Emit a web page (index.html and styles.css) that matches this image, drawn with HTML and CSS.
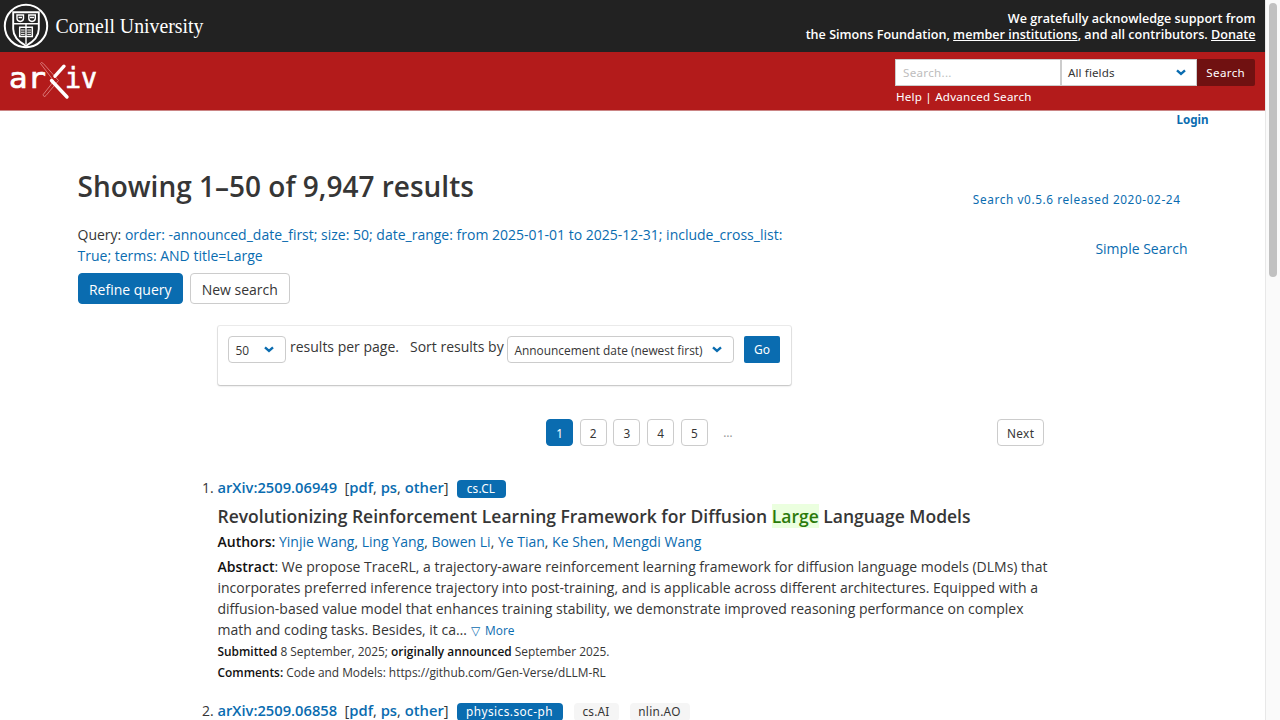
FILE: index.html
```html
<!DOCTYPE html>
<html lang="en">
<head>
<meta charset="utf-8">
<title>Search | arXiv e-print repository</title>
<link rel="stylesheet" href="styles.css">
</head>
<body>
<div class="page">
<header>
  <div class="attribution">
    <svg class="cornell" width="210" height="52" viewBox="0 0 210 52" role="img" aria-label="Cornell University">
      <g fill="none" stroke="#fff">
        <circle cx="26" cy="26" r="21.2" stroke-width="2"/>
        <path stroke-width="1.9" d="M13.2 12.3H38.8V29C38.8 37 33 42 26 45.8C19 42 13.2 37 13.2 29Z"/>
        <path stroke-width="1.4" d="M13.2 23.8H38.8M26 24V44"/>
        <path stroke-width="1.4" d="M17 15H23.5V18.5Q23.5 21 20.2 21.5Q17 21 17 18.5ZM28.8 15H35.3V18.5Q35.3 21 32 21.5Q28.8 21 28.8 18.5ZM18.5 17.5H22M30 17.5H34"/>
        <path stroke-width="1.5" d="M26 27.3H19.7V36.6H32.3V27.3Z"/>
        <path stroke-width="1" d="M21 30H24.7M21 32.2H24.7M21 34.4H24.7M27.3 30H31M27.3 32.2H31M27.3 34.4H31"/>
      </g>
      <text class="cornell-name" x="55.5" y="33" textLength="148" lengthAdjust="spacingAndGlyphs">Cornell University</text>
    </svg>
    <p class="support">We gratefully acknowledge support from<br>the Simons Foundation, <a>member institutions</a>, and all contributors. <a>Donate</a></p>
  </div>
  <div class="identity">
    <svg class="arxiv" width="110" height="58" viewBox="0 0 110 58" role="img" aria-label="arXiv">
      <text class="logo-text" x="9" y="36.3" textLength="37" lengthAdjust="spacingAndGlyphs">ar</text>
      <text class="logo-text" x="65" y="36.3" textLength="32" lengthAdjust="spacingAndGlyphs">iv</text>
      <path d="M40.5 11.5Q41 9.5 43.3 11.5L58.5 28.5L46 43.5Q43.5 46 43.2 42.5L53.8 29Z" fill="none" stroke="#e28f8f" stroke-width=".8"/>
      <path d="M64 14.2L55 24.2M51.5 28.5L67 45" fill="none" stroke="#fff" stroke-width="3.4" stroke-linecap="round"/>
    </svg>
    <div class="search">
      <div class="search-row">
        <span class="input">Search...</span>
        <span class="field"><span class="fields-label">All fields</span><svg width="10" height="7" viewBox="0 0 10 7"><path d="M1 1.3L5 4.8L9 1.3"/></svg></span>
        <span class="submit">Search</span>
      </div>
      <p class="help">Help | Advanced Search</p>
    </div>
  </div>
</header>
<div class="user"><a>Login</a></div>
<main>
  <div class="intro">
    <div class="summary">
      <h1>Showing 1–50 of 9,947 results</h1>
      <p class="query">Query: <a>order: -announced_date_first; size: 50; date_range: from 2025-01-01 to 2025-12-31; include_cross_list:<br>True; terms: AND title=Large</a></p>
      <div class="buttons"><span class="button primary refine">Refine query</span><span class="button newsearch">New search</span></div>
    </div>
    <div class="aside"><a class="version">Search v0.5.6 released 2020-02-24</a><a class="simple">Simple Search</a></div>
  </div>
  <div class="sortbox">
    <span class="select size"><span>50</span><svg width="10" height="7" viewBox="0 0 10 7"><path d="M1 1.3L5 4.8L9 1.3"/></svg></span>
    <span class="perpage">results per page.</span><span class="sortby">Sort results by</span>
    <span class="select order"><span>Announcement date (newest first)</span><svg width="10" height="7" viewBox="0 0 10 7"><path d="M1 1.3L5 4.8L9 1.3"/></svg></span>
    <span class="go">Go</span>
  </div>
  <nav class="pagination">
    <a class="current">1</a><a>2</a><a>3</a><a>4</a><a>5</a><span class="dots">…</span><a class="next">Next</a>
  </nav>
  <ol class="results">
    <li>
      <div class="id-row"><span class="num">1.</span><a class="id">arXiv:2509.06949</a><span class="formats">[<a>pdf</a>, <a>ps</a>, <a>other</a>]</span><span class="tag blue cl">cs.CL</span></div>
      <p class="title">Revolutionizing Reinforcement Learning Framework for Diffusion <mark>Large</mark> Language Models</p>
      <p class="authors"><b>Authors:</b> <a>Yinjie Wang</a>, <a>Ling Yang</a>, <a>Bowen Li</a>, <a>Ye Tian</a>, <a>Ke Shen</a>, <a>Mengdi Wang</a></p>
      <p class="abstract"><b>Abstract</b>: We propose TraceRL, a trajectory-aware reinforcement learning framework for diffusion language models (DLMs) that<br>incorporates preferred inference trajectory into post-training, and is applicable across different architectures. Equipped with a<br>diffusion-based value model that enhances training stability, we demonstrate improved reasoning performance on complex<br>math and coding tasks. Besides, it ca… <a class="more"><span class="tri">▽</span> More</a></p>
      <p class="meta"><b>Submitted</b> 8 September, 2025; <b>originally announced</b> September 2025.</p>
      <p class="meta"><b>Comments:</b> Code and Models: https://github.com/Gen-Verse/dLLM-RL</p>
    </li>
    <li>
      <div class="id-row"><span class="num">2.</span><a class="id">arXiv:2509.06858</a><span class="formats">[<a>pdf</a>, <a>ps</a>, <a>other</a>]</span><span class="tag blue soc">physics.soc-ph</span><span class="tag ai">cs.AI</span><span class="tag ao">nlin.AO</span></div>
    </li>
  </ol>
</main>
</div>
<div class="scrollbar"><div class="thumb"></div></div>
</body>
</html>
```

FILE: styles.css
```css
* { box-sizing: border-box; }
body { margin: 0; width: 1280px; height: 720px; overflow: hidden; display: flex; background: #fff; color: #363636; font: 14px/21px "Open Sans", sans-serif; }
p, h1, ol { margin: 0; padding: 0; }
a { color: #0a6cb0; }
b { font-weight: 600; color: #111; }
.page { width: 1265px; height: 720px; overflow: hidden; }
.scrollbar { width: 15px; height: 720px; background: #fafafa; border-left: 1px solid #e8e8e8; padding: 3px 2px 0 3px; }
.thumb { width: 8px; height: 274px; border-radius: 4px; background: #c1c1c1; }
.attribution { height: 52px; background: #222; display: flex; justify-content: space-between; }
.cornell-name { font: 20px "Liberation Serif", serif; fill: #fff; }
.support { padding: 11px 9.5px 0 0; text-align: right; color: #fff; font-size: 12.6px; font-weight: 600; line-height: 16px; }
.support a { color: #fff; text-decoration: underline; }
.identity { height: 59px; background: #b31b1b; border-bottom: 1px solid #cb8585; display: flex; justify-content: space-between; }
.logo-text { font: 28px "DejaVu Sans Mono", monospace; fill: #fff; stroke: #fff; stroke-width: .7px; }
.search { width: 370px; padding-top: 7px; font-family: "Noto Sans", sans-serif; font-size: 11.6px; }
.search-row { display: flex; height: 27px; line-height: 27px; }
.input { width: 166px; background: #fff; border: 1px solid #ccc; padding-left: 7px; line-height: 25px; color: #bdbdbd; letter-spacing: .3px; }
.field { width: 136px; background: #fff; border: 1px solid #ccc; padding: 0 10px 0 6px; display: flex; align-items: center; justify-content: space-between; letter-spacing: .1px; }
.field svg path, .select svg path { fill: none; stroke: #0a6cb0; stroke-width: 2.4; }
.submit { width: 57.5px; background: #701111; color: #fff; text-align: center; border-radius: 0 2px 2px 0; letter-spacing: .35px; }
.help { color: #fff; line-height: 22px; padding-left: 1px; letter-spacing: .22px; }
.user { height: 20px; padding-right: 56.5px; text-align: right; font: 700 11.6px/18px "Noto Sans", sans-serif; }
main { padding-left: 77.5px; }
.intro { display: flex; height: 196.5px; }
.summary { width: 740px; }
h1 { font-size: 28px; font-weight: 600; line-height: 36px; padding-top: 39px; }
.query { padding-top: 20px; white-space: nowrap; }
.buttons { display: flex; gap: 7px; padding-top: 7px; }
.button { height: 31px; line-height: 31px; border: 1px solid #ccc; border-radius: 4px; text-align: center; }
.primary { background: #0a6cb0; border-color: #0a6cb0; color: #fff; }
.refine { width: 105.5px; }
.newsearch { width: 99.5px; }
.aside { display: flex; flex-direction: column; width: 370px; align-items: flex-end; padding-top: 61px; }
.version { font: 11.8px/18px "Noto Sans", sans-serif; margin-right: 7px; letter-spacing: .6px; }
.simple { margin-top: 30px; }
.user { height: 18px; }
.sortbox { width: 573px; height: 59px; margin-left: 140px; padding: 10.5px 10.5px 0 10.5px; display: flex; border-radius: 2px; box-shadow: 0 1px 2px rgba(10,10,10,.2), 0 0 0 1px rgba(10,10,10,.08); }
.select { height: 27px; line-height: 24px; border: 1px solid #ccc; border-radius: 4px; font-size: 11.9px; display: flex; align-items: center; justify-content: space-between; padding: 0 11px 0 6.5px; white-space: nowrap; }
.size { width: 58px; }
.order { width: 227px; margin-left: 3px; }
.perpage { margin-left: 4px; width: 120px; }
.sortby { width: 94px; white-space: nowrap; }
.go { margin-left: 10px; width: 36px; height: 27px; border-radius: 2px; background: #0a6cb0; color: #fff; font: 12px/27px "Noto Sans", sans-serif; text-align: center; }
.pagination { display: flex; gap: 6.7px; padding: 34.5px 0 0 468.5px; font-family: "Noto Sans", sans-serif; font-size: 11.8px; }
.pagination a { width: 27px; height: 27px; line-height: 26px; border: 1px solid #ccc; border-radius: 4px; text-align: center; color: #363636; }
.pagination a.current { background: #0a6cb0; border-color: #0a6cb0; color: #fff; }
.dots { width: 27px; text-align: center; line-height: 27px; color: #999; }
.pagination a.next { width: 47px; margin-left: 249px; letter-spacing: .4px; }
.results { list-style: none; margin: 31px 0 0 124px; }
.results li { height: 223px; padding-left: 16px; white-space: nowrap; }
.id-row { display: flex; height: 22px; margin-left: -16px; line-height: 21px; }
.num { width: 16px; padding-left: .6px; }
.id { width: 127px; font-size: 14.7px; font-weight: 600; }
.formats { width: 112px; font-size: 14.75px; }
.formats a { font-weight: 600; }
.tag { height: 18px; margin-top: 3px; line-height: 17px; border-radius: 4px; background: #f5f5f5; font-family: "Noto Sans", sans-serif; font-size: 11.8px; text-align: center; margin-right: 11px; }
.blue { background: #0a6cb0; color: #fff; }
.cl { width: 49px; letter-spacing: .2px; }
.soc { width: 106px; letter-spacing: .45px; }
.ai { width: 45px; letter-spacing: .2px; }
.ao { width: 60px; letter-spacing: .3px; }
.title { font-size: 17.5px; font-weight: 600; line-height: 24px; padding-top: 5px; }
mark { background: #ebffdf; color: #2a7a0a; }
.authors { padding-top: 3px; }
.abstract { padding-top: 4px; }
.more { font-size: 11.9px; }
.tri { margin-right: 2.5px; }
.meta { font-size: 11.9px; line-height: 21px; }
```
